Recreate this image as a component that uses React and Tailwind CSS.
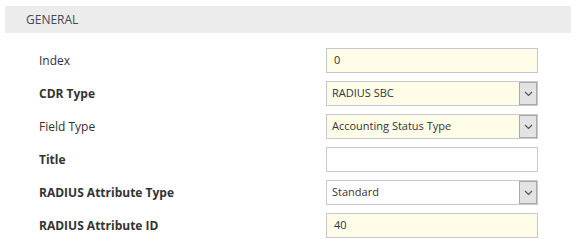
import React from "react";

const Chevron = () => (
  <svg width="9" height="6" viewBox="0 0 9 6" fill="none">
    <path d="M1 1l3.5 3.5L8 1" stroke="#555" strokeWidth="1.2" />
  </svg>
);

function Row({ label, bold, children }) {
  return (
    <div className="flex items-center h-[33px]">
      <div className={`w-[326px] pl-[39px] text-[12px] text-[#333] ${bold ? "font-bold" : ""}`}>{label}</div>
      {children}
    </div>
  );
}

function Input({ value, yellow }) {
  return (
    <div className={`w-[212px] h-[25px] border border-[#c6c9d0] flex items-center pl-[7px] text-[11px] text-[#333] ${yellow ? "bg-[#fffde8]" : "bg-white"}`}>
      {value}
    </div>
  );
}

function Select({ value, yellow }) {
  return (
    <div className={`w-[212px] h-[25px] border border-[#c6c9d0] flex items-center text-[11px] text-[#333] ${yellow ? "bg-[#fffde8]" : "bg-white"}`}>
      <div className="flex-1 pl-[5px]">{value}</div>
      <div className="w-[18px] h-[23px] bg-[#e3e3e3] border border-[#a9a9a9] flex items-center justify-center">
        <Chevron />
      </div>
    </div>
  );
}

export default function App() {
  return (
    <div className="w-[579px] h-[247px] bg-white pt-[6px]" style={{ fontFamily: "'Open Sans', sans-serif" }}>
      <div className="ml-[5px] w-[566px] h-[27px] bg-[#ececec] flex items-center pl-[21px] text-[12px] text-[#3f4a5a]">
        GENERAL
      </div>
      <div className="mt-[11px]">
        <Row label="Index">
          <Input value="0" yellow />
        </Row>
        <Row label="CDR Type" bold>
          <Select value="RADIUS SBC" yellow />
        </Row>
        <Row label="Field Type">
          <Select value="Accounting Status Type" yellow />
        </Row>
        <Row label="Title" bold>
          <Input value="" />
        </Row>
        <Row label="RADIUS Attribute Type" bold>
          <Select value="Standard" />
        </Row>
        <Row label="RADIUS Attribute ID" bold>
          <Input value="40" yellow />
        </Row>
      </div>
    </div>
  );
}
